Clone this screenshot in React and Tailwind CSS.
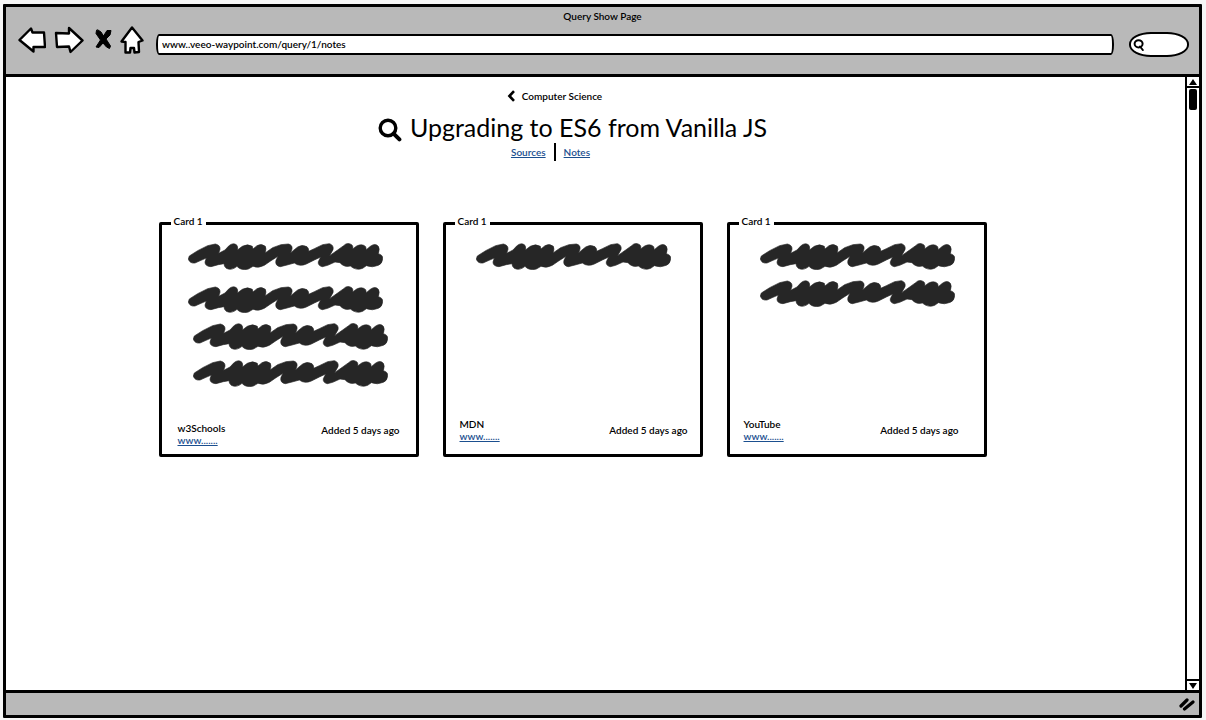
import React from "react";

const SCRIBBLE =
  "M22 74L25 65L50 49L80 34L103 29Q118 32 117 45L113 57L132 47L142 36Q154 24 166 31Q172 36 169 47L184 36Q200 27 214 36L216 44L228 34Q242 26 253 36Q257 43 252 56L275 40L300 31L322 29Q335 32 333 44L329 55L350 38Q362 29 378 37Q384 42 383 51L400 43L425 31L445 28Q459 32 456 46L446 64L470 47L488 34Q500 22 513 32Q517 37 515 44L527 35Q544 27 554 37L556 46L568 36Q583 25 592 36Q597 43 592 58Q606 62 605 73Q604 88 592 93Q574 101 556 94L545 102Q525 110 508 95Q490 100 477 85L462 83L440 93L424 97Q410 94 412 82L419 68L400 77L376 89Q356 98 340 86L318 92L298 97Q281 94 285 78L291 66L270 79L250 93Q232 103 216 96L202 104Q180 110 168 96Q152 110 136 102Q129 97 129 88L112 91L90 97Q72 96 72 83L76 71L60 78L42 86Q26 88 22 74Z";

function Scribble({ className = "" }) {
  return (
    <svg
      viewBox="21 26 585 81"
      aria-hidden="true"
      className={`block h-[27px] w-[195px] max-w-full ${className}`}
    >
      <path d={SCRIBBLE} fill="#262626" stroke="#262626" strokeWidth="2" strokeLinejoin="round" />
    </svg>
  );
}

function ToolbarIcon({ label, className, children, viewBox }) {
  return (
    <button type="button" aria-label={label} className="block">
      <svg
        viewBox={viewBox}
        className={className}
        fill="white"
        stroke="black"
        strokeWidth="2.4"
        strokeLinejoin="round"
        strokeLinecap="round"
      >
        {children}
      </svg>
    </button>
  );
}

const cards = [
  {
    id: "w3schools",
    name: "w3Schools",
    body: "pl-[26px]",
    lines: ["", "mt-4", "ml-[5px] mt-[10px]", "ml-[5px] mt-[10px]"],
    footer: "pl-4 pr-4",
    source: "pb-2",
  },
  {
    id: "mdn",
    name: "MDN",
    body: "pl-[30px]",
    lines: [""],
    footer: "pl-[14px] pr-3",
    source: "pb-3",
  },
  {
    id: "youtube",
    name: "YouTube",
    body: "pl-[30px]",
    lines: ["", "mt-[10px]"],
    footer: "pl-[14px] pr-[25px]",
    source: "pb-3",
  },
];

function Card({ card }) {
  return (
    <fieldset className="flex h-[242px] min-w-0 flex-col rounded-[2px] border-[3px] border-black">
      <legend className="ml-[9px] px-[3px] pb-1 leading-3">Card 1</legend>
      <div className="flex h-full flex-col justify-between">
        <div className={`pt-3 ${card.body}`}>
          {card.lines.map((line, i) => (
            <Scribble key={i} className={line} />
          ))}
        </div>
        <div className={`flex items-end justify-between ${card.footer}`}>
          <div className={`leading-3 ${card.source}`}>
            <p>{card.name}</p>
            <a href={`#${card.id}`} className="block text-[#1b4f8f] underline">
              www.......
            </a>
          </div>
          <p className="pb-[18px] leading-3">Added 5 days ago</p>
        </div>
      </div>
    </fieldset>
  );
}

export default function App() {
  return (
    <div className="flex min-h-screen flex-col bg-[#f6f6f6] pt-1 pr-1 pb-[2px] pl-[3px] font-['Lato','Liberation_Sans',sans-serif] text-[10px] font-semibold text-black">
      <div className="flex grow flex-col rounded-[1px] border-[3px] border-black bg-white">
        <header className="border-b-[3px] border-black bg-[#b9b9b9] pb-[17px]">
          <p className="pt-[3px] text-center leading-3">Query Show Page</p>
          <div className="flex items-center pr-[10px] pl-3">
            <ToolbarIcon label="Back" viewBox="0 0 28 28" className="h-7 w-7">
              <path d="M1.5 14L13 2.5L14.5 6.5L26 6.5L27 21L15.5 21L15.5 25.5Z" />
            </ToolbarIcon>
            <div className="pl-2">
              <ToolbarIcon label="Forward" viewBox="0 0 30 28" className="h-7 w-[30px]">
                <path d="M2 7L15 7.5L15 2L28.5 14.5L16.5 26L15 20.5L3 21Z" />
              </ToolbarIcon>
            </div>
            <div className="pl-[10px]">
              <ToolbarIcon label="Stop" viewBox="0 0 18 22" className="h-[22px] w-[18px]">
                <path
                  d="M4 1L7 3L9.5 7L13 1.5L17 1.5L16 6L12 10L16.5 17L15.5 19.5L12.5 18L9 14L5 18.5L2 18L6.5 11L2 4.5L2.5 1.5Z"
                  strokeWidth="1"
                  fill="black"
                />
              </ToolbarIcon>
            </div>
            <div className="pl-2">
              <ToolbarIcon label="Home" viewBox="0 0 24 28" className="h-7 w-6">
                <path d="M12 1.5L22.5 14.5L18.5 16L19 26L14.5 26.5L14 22L10.5 22L10 26.5L5.5 26.5L5.5 16L1.5 15.5Z" />
              </ToolbarIcon>
            </div>
            <div className="flex grow items-center gap-[15px] pt-[10px] pl-3">
              <input
                aria-label="Address"
                type="text"
                defaultValue="www..veeo-waypoint.com/query/1/notes"
                className="h-[21px] min-w-0 grow rounded-[3px/10px] border-2 border-black bg-white px-1 pb-[2px] leading-3 outline-none"
              />
              <label className="flex h-[25px] w-[60px] items-center rounded-[22px/12px] border-[2px] border-black bg-white pl-[2px]">
                <svg viewBox="0 0 12 12" className="h-3 w-3 shrink-0" fill="none" stroke="black" strokeWidth="2">
                  <ellipse cx="5.6" cy="4.8" rx="4" ry="3.6" />
                  <path d="M7 7.5L9.8 11" strokeLinecap="round" />
                </svg>
                <input aria-label="Search" type="search" className="w-full min-w-0 bg-transparent outline-none" />
              </label>
            </div>
          </div>
        </header>

        <div className="flex grow">
          <main className="min-w-0 grow pr-[46px]">
            <div className="flex justify-center pt-3 pr-9">
              <a href="#computer-science" className="flex items-center gap-[6px] leading-[14px]">
                <svg viewBox="0 0 9 12" className="h-3 w-[9px]" fill="none" stroke="black" strokeWidth="2.6">
                  <path d="M7 1.2L2.4 6L7 10.8" />
                </svg>
                Computer Science
              </a>
            </div>
            <div className="flex items-center justify-center gap-2 pt-2">
              <svg viewBox="0 0 24 24" className="mt-[6px] h-6 w-6" fill="none" stroke="black" strokeWidth="3.4">
                <circle cx="10" cy="10" r="7.8" />
                <path d="M15.6 15.6L21.4 21.4" strokeLinecap="round" strokeWidth="4" />
              </svg>
              <h1 className="text-[25px] leading-8 font-normal">Upgrading to ES6 from Vanilla JS</h1>
            </div>
            <nav className="flex items-center justify-center pr-11 leading-4 text-[#1b4f8f]">
              <a href="#sources" className="pr-2 underline">Sources</a>
              <span className="h-[18px] border-l-2 border-black" />
              <a href="#notes" className="pl-2 underline">Notes</a>
            </nav>
            <div className="mx-auto mt-[54px] grid max-w-[828px] grid-cols-3 gap-6">
              {cards.map((card) => (
                <Card key={card.id} card={card} />
              ))}
            </div>
          </main>

          <div className="flex w-[14px] shrink-0 flex-col border-l-2 border-black">
            <button type="button" aria-label="Scroll up" className="flex h-[11px] items-center justify-center border-b-2 border-black">
              <svg viewBox="0 0 8 6" className="h-[6px] w-2"><path d="M4 0L8 6H0Z" /></svg>
            </button>
            <div className="grow px-[2px] pt-[1px]">
              <div className="h-[21px] rounded-[2px] bg-black" />
            </div>
            <button type="button" aria-label="Scroll down" className="flex h-[11px] items-center justify-center border-t-2 border-black">
              <svg viewBox="0 0 8 6" className="h-[6px] w-2"><path d="M0 0H8L4 6Z" /></svg>
            </button>
          </div>
        </div>

        <footer className="flex h-[25px] items-center justify-end border-t-[3px] border-black bg-[#b9b9b9] pr-1">
          <svg viewBox="0 0 16 13" className="h-[13px] w-4" stroke="black" strokeWidth="3.2" strokeLinecap="round">
            <path d="M2 8L8 2M5.5 11L14 4" />
          </svg>
        </footer>
      </div>
    </div>
  );
}
